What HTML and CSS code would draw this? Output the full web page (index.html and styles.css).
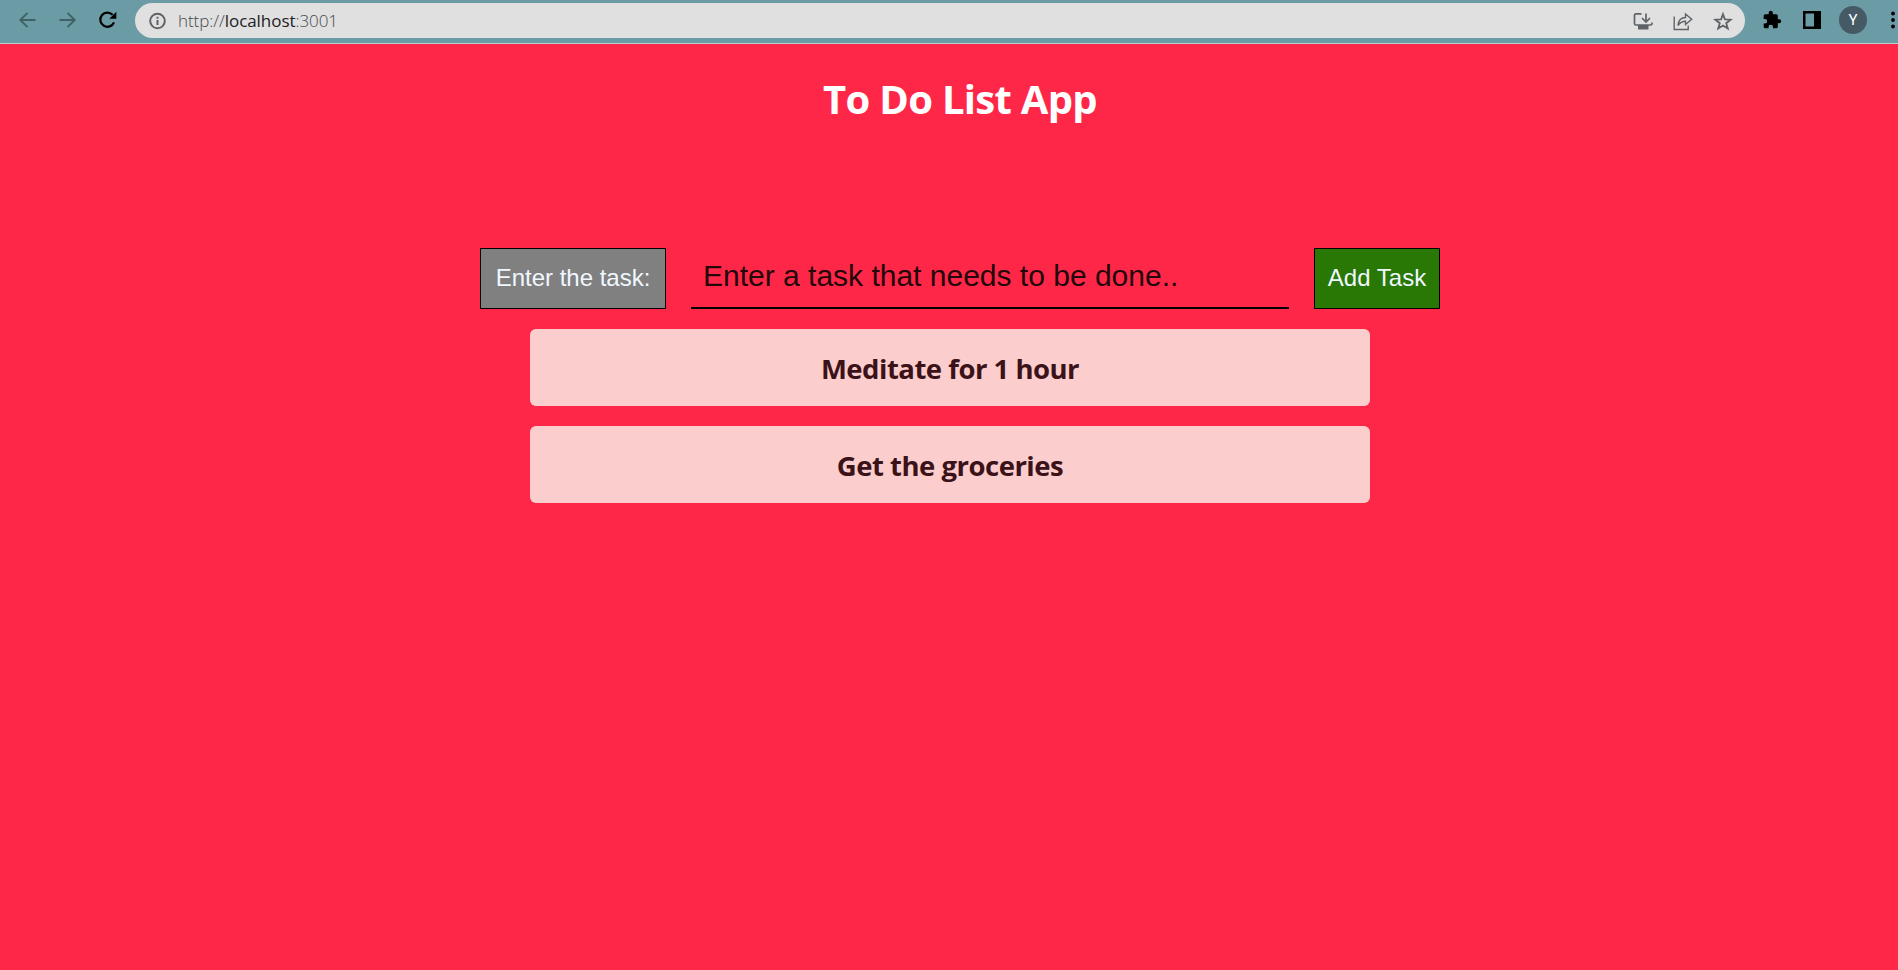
FILE: index.html
```html
<!DOCTYPE html>
<html lang="en">
<head>
<meta charset="utf-8">
<title>To Do List App</title>
<link rel="stylesheet" href="styles.css">
</head>
<body>
<header class="toolbar">
  <nav class="nav">
    <svg class="icon dim" viewBox="0 0 20 20"><path d="M18.500 10H3.500M10.500 2.800L3.300 10l7.200 7.200"/></svg>
    <svg class="icon dim" viewBox="0 0 20 20"><path d="M2.500 10h15M10.500 2.800l7.200 7.200-7.200 7.200"/></svg>
    <svg class="icon reload" viewBox="0 0 20 20"><path d="M15.600 4.800A7.100 7.100 0 1 0 17 12.300"/><path class="solid" d="M19.300 1.800v7h-7z"/></svg>
  </nav>
  <div class="omnibox">
    <svg class="icon info" viewBox="0 0 20 20"><circle cx="10.500" cy="10" r="7.300"/><path d="M10.500 9v5M10.500 5.800v2"/></svg>
    <span class="url">http://<b>localhost</b>:3001</span>
    <div class="actions">
      <svg class="icon" viewBox="0 0 20 20"><path d="M8.500 2.800H3Q1.500 2.800 1.500 4.300v8.200Q1.500 14 3 14h14.500q1.500 0 1.500-1.500V11.500M13 2.500v8M9 7l4 4 4-4"/><path class="solid" d="M5 14h10.500v4.500H5z"/></svg>
      <svg class="icon thin" viewBox="0 0 20 20"><path d="M1.200 5.500v13h14v-4M5 14.500C5.500 9 8.500 6.500 12.500 6.500V3l6.200 5.200-6.200 5.300V10.200C9 10.200 7 11.500 5 14.500z"/></svg>
      <svg class="icon star" viewBox="0 0 20 20"><path d="M10 3.200l1.900 5.100 5.800.4-4.500 3.500 1.600 5.300-4.800-3-4.800 3 1.600-5.300-4.500-3.500 5.800-.4z"/></svg>
    </div>
  </div>
  <div class="tools">
    <svg class="icon puzzle" viewBox="0 0 24 24"><path class="solid" d="M20.500 11H19V7a2 2 0 0 0-2-2h-4V3.500a2.500 2.500 0 0 0-5 0V5H4a2 2 0 0 0-2 2v3.800h1.500a2.700 2.700 0 0 1 0 5.400H2V20a2 2 0 0 0 2 2h3.800v-1.500a2.700 2.700 0 0 1 5.400 0V22H17a2 2 0 0 0 2-2v-4h1.500a2.500 2.500 0 0 0 0-5z"/></svg>
    <svg class="icon panel" viewBox="0 0 20 20"><path d="M2.250 2.250h15.500v15.500H2.250z"/><path class="solid" d="M12 1h7v18h-7z"/></svg>
    <span class="avatar">Y</span>
    <svg class="dots" viewBox="0 0 4 18"><circle cx="2" cy="2.500" r="1.900"/><circle cx="2" cy="9" r="1.900"/><circle cx="2" cy="15.500" r="1.900"/></svg>
  </div>
</header>
<main class="app">
  <h1 class="title">To Do List App</h1>
  <form class="entry">
    <label class="entry-label" for="task">Enter the task:</label>
    <input class="entry-input" id="task" type="text" placeholder="Enter a task that needs to be done..">
    <button class="entry-button" type="button">Add Task</button>
  </form>
  <ul class="tasks">
    <li class="task">Meditate for 1 hour</li>
    <li class="task">Get the groceries</li>
  </ul>
</main>
</body>
</html>
```
FILE: styles.css
```css
* { box-sizing: border-box; }
body {
  margin: 0;
  height: 970px;
  overflow: hidden;
  background: #ff2748;
  font-family: "Open Sans", "Noto Sans", sans-serif;
}
.toolbar {
  display: flex;
  align-items: flex-start;
  height: 44px;
  padding-top: 3px;
  overflow: hidden;
  background: #6b9ba4;
  border-bottom: 1px solid #b9cdd1;
}
.icon {
  width: 20px;
  height: 20px;
  flex: none;
  fill: none;
  stroke: #5f6368;
  stroke-width: 1.7;
}
.solid { fill: currentColor; stroke: none; }
.nav {
  display: flex;
  gap: 20px;
  width: 135px;
  padding: 7px 0 0 17px;
}
.nav .dim { stroke: #3f6067; stroke-width: 1.900; }
.nav .reload { stroke: #000; stroke-width: 2.200; color: #000; }
.omnibox {
  display: flex;
  align-items: center;
  width: 1610px;
  height: 35px;
  padding: 0 12px 0 12px;
  border-radius: 18px;
  background: #e0e0e0;
}
.info { stroke-width: 2; }
.url {
  margin-left: 11px;
  font-size: 17px;
  font-weight: 300;
  line-height: 24px;
  letter-spacing: -0.06px;
  color: #46494d;
}
.url b { font-weight: 400; color: #202124; }
.actions {
  display: flex;
  gap: 20px;
  margin-left: auto;
  color: #5f6368;
}
.actions .thin { stroke-width: 1.400; }
.actions .star { stroke-width: 1.800; }
.tools {
  display: flex;
  align-items: center;
  height: 34px;
  flex: none;
  color: #000;
}
.puzzle { margin-left: 17px; }
.panel { margin-left: 20px; stroke: #000; stroke-width: 2.500; }
.avatar {
  width: 28px;
  height: 28px;
  margin-left: 17px;
  border-radius: 50%;
  background: #455a64;
  color: #fff;
  font: 15px/28px Roboto, sans-serif;
  text-align: center;
}
.dots { width: 4px; height: 18px; margin-left: 24px; flex: none; }
.app { padding-top: 28px; }
.title {
  width: 1920px;
  margin: 0;
  font-size: 40px;
  line-height: 54px;
  letter-spacing: -0.7px;
  text-align: center;
  white-space: nowrap;
  color: #fff;
}
.entry {
  display: flex;
  gap: 25px;
  width: 960px;
  height: 61px;
  margin: 122px 0 0 480px;
  font-family: "Liberation Sans", Arial, sans-serif;
}
.entry-label, .entry-button {
  flex: none;
  padding: 0;
  border: 1px solid #000;
  font: 24px/57px "Liberation Sans", Arial, sans-serif;
  text-align: center;
  color: aliceblue;
}
.entry-label { width: 186px; background: gray; }
.entry-button { width: 126px; padding-bottom: 2px; background: #297704; }
.entry-input {
  width: 598px;
  padding: 0 12px 4px;
  border: 0;
  border-bottom: 2px solid #000;
  border-radius: 0;
  outline: 0;
  background: transparent;
  font: 30px "Liberation Sans", Arial, sans-serif;
}
.entry-input::placeholder { color: #22070b; opacity: 1; }
.tasks {
  display: flex;
  flex-direction: column;
  gap: 20px;
  width: 840px;
  margin: 20px 0 0 530px;
  padding: 0;
  list-style: none;
}
.task {
  height: 77px;
  border-radius: 6px;
  background: #fccdcd;
  color: #3a1217;
  font-size: 27.5px;
  font-weight: 700;
  line-height: 79px;
  letter-spacing: -0.5px;
  text-align: center;
}
```
